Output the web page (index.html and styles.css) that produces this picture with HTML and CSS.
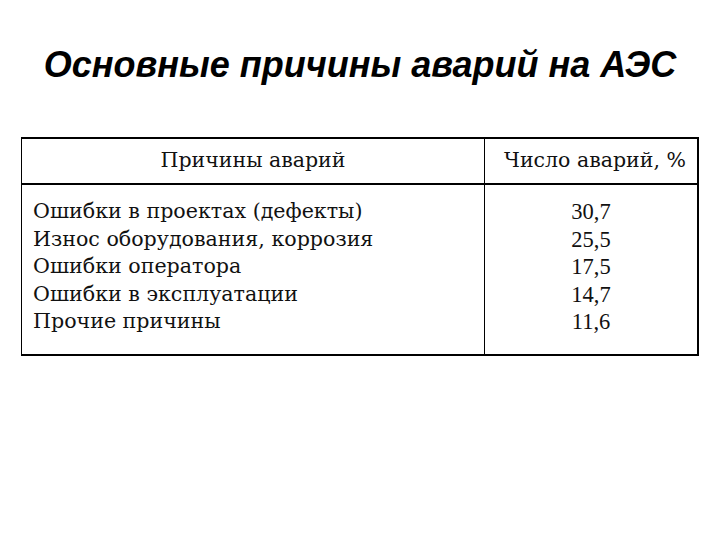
FILE: index.html
```
<!DOCTYPE html>
<html lang="ru">
<head>
<meta charset="utf-8">
<link rel="stylesheet" href="styles.css">
</head>
<body>
<h1 class="title">Основные причины аварий на АЭС</h1>
<div class="table">
  <div class="cell head left">Причины аварий</div>
  <div class="cell head right">Число аварий, %</div>
  <div class="cell body left">
    <div>Ошибки в проектах (дефекты)</div>
    <div>Износ оборудования, коррозия</div>
    <div>Ошибки оператора</div>
    <div>Ошибки в эксплуатации</div>
    <div>Прочие причины</div>
  </div>
  <div class="cell body right nums">
    <div>30,7</div>
    <div>25,5</div>
    <div>17,5</div>
    <div>14,7</div>
    <div>11,6</div>
  </div>
</div>
</body>
</html>
```
FILE: styles.css
```
html, body {
  margin: 0;
  padding: 0;
  background: #fff;
}
body {
  width: 720px;
  height: 540px;
  overflow: hidden;
}
.title {
  margin: 45px 0 0 0;
  font-family: "Liberation Sans", Arial, sans-serif;
  font-weight: bold;
  font-style: italic;
  font-size: 36px;
  line-height: 40px;
  text-align: center;
  color: #000;
}
.table {
  margin: 52px 0 0 21px;
  width: 678px;
  box-sizing: border-box;
  border: 2px solid #000;
  border-left-width: 1.5px;
  display: grid;
  grid-template-columns: 463px 1fr;
  font-family: "DejaVu Serif", "Liberation Serif", serif;
  color: #111;
}
.cell.left {
  border-right: 1px solid #000;
}
.head {
  font-size: 20.5px;
  line-height: 24px;
  padding: 9px 0 11px;
  text-align: center;
  border-bottom: 2px solid #000;
}
.head.right {
  padding-left: 8px;
}
.body {
  font-size: 20.6px;
  line-height: 27.5px;
  padding: 13px 0 18px;
}
.body.left {
  padding-left: 11px;
}
.nums {
  text-align: center;
  font-family: "Liberation Serif", "Times New Roman", serif;
  font-size: 22.5px;
}
```
